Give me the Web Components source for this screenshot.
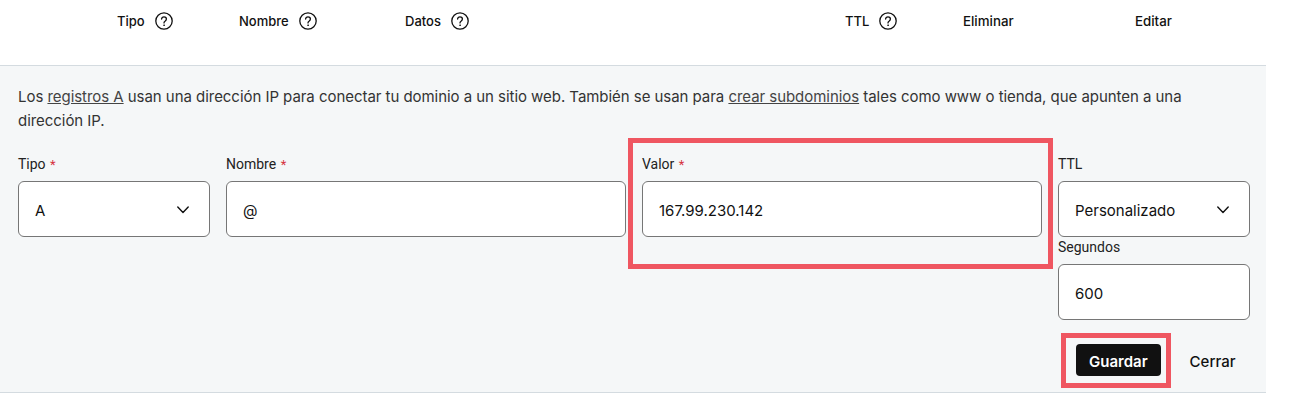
<!DOCTYPE html>
<html lang="es">
<head>
<meta charset="utf-8">
<title>Registros DNS</title>
<style>
    html, body { margin: 0; padding: 0; background: #fff; }
    body { width: 1289px; height: 410px; overflow: hidden; font-family: "Inter", "Liberation Sans", sans-serif; color: #111; }
</style>
</head>
<body>
<dns-header></dns-header>
<record-panel></record-panel>

<script>
const CHEVRON = `<svg class="chev" width="12" height="8" viewBox="0 0 12 8" fill="none" stroke="#111" stroke-width="1.4" stroke-linecap="round" stroke-linejoin="round"><path d="M.8 1 6 6.6 11.2 1"/></svg>`;

class HelpIcon extends HTMLElement {
    constructor() {
        super();
        this.attachShadow({ mode: 'open' });
        this.shadowRoot.innerHTML = `
          <style>
    :host { display: inline-flex; width: 18px; height: 18px; }
</style>
<svg width="18" height="18" viewBox="0 0 18 18" fill="none" stroke="#111" stroke-width="1.3" stroke-linecap="round">
    <circle cx="9" cy="9" r="8.2"/>
    <path d="M6.6 7.1c0-1.4 1-2.3 2.4-2.3s2.4.9 2.4 2.2c0 1.1-.6 1.6-1.4 2.2-.7.5-1 .9-1 1.7"/>
    <circle cx="9" cy="13.2" r=".5" fill="#111" stroke-width=".6"/>
</svg>
        `;
    }
}
customElements.define('help-icon', HelpIcon);

class DnsHeader extends HTMLElement {
    constructor() {
        super();
        this.attachShadow({ mode: 'open' });
        this.shadowRoot.innerHTML = `
          <style>
    :host {
        display: grid;
        grid-template-columns: 122px 166px 440px 118px 172px auto;
        height: 65px;
        box-sizing: border-box;
        padding: 12px 0 0 117px;
        font-size: 13px;
        font-weight: 500;
        color: #111;
    }
    .col { display: flex; align-items: center; gap: 10px; height: 18px; }
    .wide { font-size: 13.3px; }
</style>
<div class="col">Tipo <help-icon></help-icon></div>
<div class="col">Nombre <help-icon></help-icon></div>
<div class="col">Datos <help-icon></help-icon></div>
<div class="col">TTL <help-icon></help-icon></div>
<div class="col wide">Eliminar</div>
<div class="col wide">Editar</div>
        `;
    }
}
customElements.define('dns-header', DnsHeader);

class FormField extends HTMLElement {
    constructor() {
        super();
        this.attachShadow({ mode: 'open' });
        const required = this.hasAttribute('required') ? ' <span class="req">*</span>' : '';
        const chevron = this.hasAttribute('select') ? CHEVRON : '';
        this.shadowRoot.innerHTML = `
          <style>
    :host { display: block; }
    .label {
        height: 17px;
        margin-bottom: 8px;
        padding-top: 1px;
        font: 400 14px/17px "Roboto", "Liberation Sans", sans-serif;
        color: #222;
    }
    .req { color: #d6333f; font-size: 13px; margin-left: 1px; }
    .box {
        display: flex;
        align-items: center;
        justify-content: space-between;
        box-sizing: border-box;
        height: 56px;
        padding: 0 16px;
        background: #fff;
        border: 1px solid #767676;
        border-radius: 6px;
        font-size: 15px;
        color: #111;
    }
    .value { padding-top: 2px; }
    .chev { margin: 2px 4px 0 0; }
</style>
<div class="label"><slot name="label"></slot>${required}</div>
<div class="box"><span class="value"><slot></slot></span>${chevron}</div>
        `;
    }
}
customElements.define('form-field', FormField);

class RecordPanel extends HTMLElement {
    constructor() {
        super();
        this.attachShadow({ mode: 'open' });
        this.shadowRoot.innerHTML = `
          <style>
    :host {
        display: block;
        position: relative;
        box-sizing: border-box;
        width: 1266px;
        height: 328px;
        padding: 19px 16px 0 18px;
        background: #f5f7f8;
        border-top: 1px solid #d4dbe0;
        border-bottom: 1px solid #d4dbe0;
    }
    p {
        margin: 0 0 22px;
        font-size: 15px;
        line-height: 24px;
        letter-spacing: -0.045px;
        color: #333;
    }
    p span { display: block; }
    a { color: #444; text-decoration: underline; }
    .form {
        display: grid;
        grid-template-columns: 192px 400px 400px 192px;
        column-gap: 16px;
        align-items: start;
    }
    .ttl { display: flex; flex-direction: column; }
    .seconds { margin-top: 1px; }
    .actions {
        display: flex;
        align-items: center;
        gap: 29px;
        margin: 24px 0 0 18px;
        font-size: 15px;
    }
    button {
        height: 32px;
        padding: 2px 13px 0;
        border: none;
        border-radius: 4px;
        background: #111;
        color: #fff;
        font: 600 15px "Inter", "Liberation Sans", sans-serif;
    }
    .close { font-weight: 500; padding-top: 3px; }
    .mark {
        position: absolute;
        box-sizing: border-box;
        border: 5px solid #ef5661;
        pointer-events: none;
    }
    .mark-value { left: 628px; top: 72px; width: 425px; height: 131px; }
    .mark-save { left: 1061px; top: 267px; width: 110px; height: 55px; }
</style>
<p><span>Los <a>registros A</a> usan una dirección IP para conectar tu dominio a un sitio web. También se usan para <a>crear subdominios</a> tales como www o tienda, que apunten a una</span><span>dirección IP.</span></p>
<div class="form">
    <form-field required select><span slot="label">Tipo</span>A</form-field>
    <form-field required><span slot="label">Nombre</span>@</form-field>
    <form-field required><span slot="label">Valor</span>167.99.230.142</form-field>
    <div class="ttl">
        <form-field select><span slot="label">TTL</span>Personalizado</form-field>
        <form-field class="seconds"><span slot="label">Segundos</span>600</form-field>
        <div class="actions"><button>Guardar</button><span class="close">Cerrar</span></div>
    </div>
</div>
<div class="mark mark-value"></div>
<div class="mark mark-save"></div>
        `;
    }
}
customElements.define('record-panel', RecordPanel);
</script>
</body>
</html>
